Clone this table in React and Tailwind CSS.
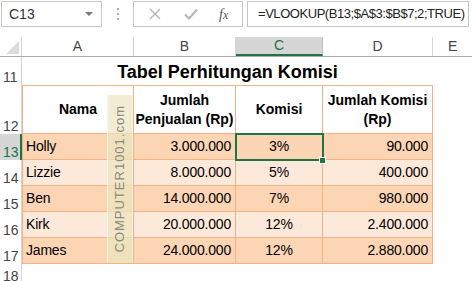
import React from "react";

const rows = [
  { n: 13, name: "Holly", sales: "3.000.000", pct: "3%", total: "90.000", dark: true },
  { n: 14, name: "Lizzie", sales: "8.000.000", pct: "5%", total: "400.000", dark: false },
  { n: 15, name: "Ben", sales: "14.000.000", pct: "7%", total: "980.000", dark: true },
  { n: 16, name: "Kirk", sales: "20.000.000", pct: "12%", total: "2.400.000", dark: false },
  { n: 17, name: "James", sales: "24.000.000", pct: "12%", total: "2.880.000", dark: true },
];

function RowHead({ n, active, className = "" }) {
  return (
    <div
      className={`w-[22px] shrink-0 flex items-end pl-[3px] pb-[1px] text-[14px] leading-none ${
        active
          ? "bg-[#d6d6d6] text-[#217346] border-r-2 border-[#217346]"
          : "bg-white text-[#444] border-r border-[#d4d4d4]"
      } ${className}`}
    >
      {n}
    </div>
  );
}

export default function App() {
  return (
    <div
      className="relative w-[472px] h-[281px] overflow-hidden bg-white text-black"
      style={{ fontFamily: '"Liberation Sans", Arial, sans-serif' }}
    >
      {/* formula bar */}
      <div className="flex h-[37px] pt-px">
        <div className="ml-px w-[101px] h-[26px] border border-[#c6c6c6] flex items-center justify-between pl-[7px] pr-[8px]">
          <span className="text-[14px] text-[#333]">C13</span>
          <span className="w-0 h-0 border-l-[4px] border-r-[4px] border-t-[4px] border-l-transparent border-r-transparent border-t-[#777]" />
        </div>
        <div className="w-[31px] flex flex-col items-center justify-center gap-[3px] h-[26px]">
          <span className="w-[2px] h-[2px] bg-[#aaa]" />
          <span className="w-[2px] h-[2px] bg-[#aaa]" />
          <span className="w-[2px] h-[2px] bg-[#aaa]" />
        </div>
        <div className="w-[110px] h-[26px] border border-[#c6c6c6] flex items-center pl-[13px]">
          <svg width="12" height="12" viewBox="0 0 12 12" className="ml-[2px]">
            <path d="M1 1 L11 11 M11 1 L1 11" stroke="#b5b5b5" strokeWidth="1.4" />
          </svg>
          <svg width="14" height="12" viewBox="0 0 14 12" className="ml-[23px]">
            <path d="M1 6.5 L5 10.5 L13 1.5" stroke="#b5b5b5" strokeWidth="2" fill="none" />
          </svg>
          <span
            className="ml-[21px] text-[14px] italic text-[#555]"
            style={{ fontFamily: '"Liberation Serif", "Times New Roman", serif' }}
          >
            f<span className="text-[12px]">x</span>
          </span>
        </div>
        <div className="ml-[4px] w-[222px] h-[26px] border border-[#c6c6c6] flex items-center pl-[10px] text-[13px] tracking-[-0.45px] text-[#222] whitespace-nowrap">
          =VLOOKUP(B13;$A$3:$B$7;2;TRUE)
        </div>
      </div>

      {/* column headers */}
      <div className="flex h-[20px] border-b border-[#ababab] text-[14px] text-[#444]">
        <div className="w-[22px] shrink-0 border-r border-[#d4d4d4] flex items-end justify-end pr-[2px] pb-[2px]">
          <svg width="13" height="13" viewBox="0 0 13 13">
            <path d="M13 0 L13 13 L0 13 Z" fill="#dcdcdc" />
          </svg>
        </div>
        <div className="w-[112px] border-r border-[#d4d4d4] flex items-center justify-center">A</div>
        <div className="w-[102px] border-r border-[#d4d4d4] flex items-center justify-center">B</div>
        <div className="w-[87px] bg-[#d6d6d6] text-[#217346] border-b-2 border-[#217346] border-r border-r-[#bdbdbd] flex items-center justify-center">C</div>
        <div className="w-[110px] border-r border-[#d4d4d4] flex items-center justify-center">D</div>
        <div className="flex-1 flex items-center pl-[15px]">E</div>
      </div>

      {/* row 11: title */}
      <div className="flex h-[28px]">
        <RowHead n={11} />
        <div className="w-[411px] flex items-center justify-center text-[18px] font-bold pt-[2px]">
          Tabel Perhitungan Komisi
        </div>
      </div>

      {/* row 12: headers */}
      <div className="flex h-[49px]">
        <RowHead n={12} />
        <div className="w-[112px] border border-[#f4b183] flex items-center justify-center font-bold text-[14px]">
          Nama
        </div>
        <div className="w-[102px] border-t border-r border-b border-[#f4b183] flex items-center justify-center text-center font-bold text-[14px] leading-[19px]">
          Jumlah
          <br />
          Penjualan (Rp)
        </div>
        <div className="w-[87px] border-t border-r border-b border-[#f4b183] flex items-center justify-center font-bold text-[14px]">
          Komisi
        </div>
        <div className="w-[110px] border-t border-r border-b border-[#f4b183] flex items-center justify-center text-center font-bold text-[14px] leading-[19px]">
          Jumlah Komisi
          <br />
          (Rp)
        </div>
      </div>

      {/* data rows */}
      {rows.map((r) => (
        <div key={r.n} className="flex h-[26px]">
          <RowHead n={r.n} active={r.n === 13} className="pt-px" />
          <div className={`flex text-[14px] tracking-[-0.2px] ${r.dark ? "bg-[#fcd5b4]" : "bg-[#fde9d9]"}`}>
            <div className="w-[112px] border-l border-r border-b border-[#f4b183] flex items-center pl-[3px]">
              {r.name}
            </div>
            <div className="w-[102px] border-r border-b border-[#f4b183] flex items-center justify-end pr-[4px]">
              {r.sales}
            </div>
            <div className="w-[87px] border-r border-b border-[#f4b183] flex items-center justify-center">
              {r.pct}
            </div>
            <div className="w-[110px] border-r border-b border-[#f4b183] flex items-center justify-end pr-[4px]">
              {r.total}
            </div>
          </div>
        </div>
      ))}

      {/* row 18 */}
      <div className="flex h-[20px]">
        <RowHead n={18} />
      </div>

      {/* watermark overlay */}
      <div className="absolute left-[107px] top-[95px] w-[26px] h-[168px] bg-[#ebe5c0]/70 border-x border-white/60 flex items-center justify-center">
        <span className="-rotate-90 whitespace-nowrap text-[13px] tracking-[1px] text-[#8c8a7a]">
          COMPUTER1001.com
        </span>
      </div>

      {/* selection C13 */}
      <div className="absolute left-[235px] top-[133px] w-[89px] h-[28px] border-2 border-[#217346]" />
      <div className="absolute left-[319px] top-[157px] w-[7px] h-[7px] bg-[#217346] border border-white" />
    </div>
  );
}
